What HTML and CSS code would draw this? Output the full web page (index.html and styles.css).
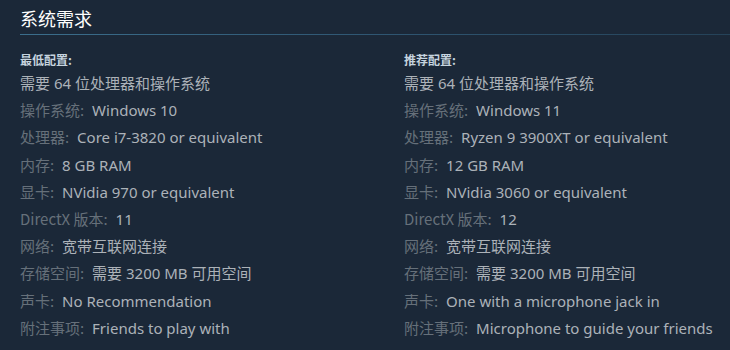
FILE: index.html
```html
<!DOCTYPE html>
<html lang="zh-CN">
<head>
<meta charset="utf-8">
<link rel="stylesheet" href="styles.css">
</head>
<body>
<div class="sysreq">
  <h2 class="title">系统需求</h2>
  <div class="cols">
    <div class="col">
      <div class="head">最低配置:</div>
      <ul class="list">
        <li class="plain">需要 64 位处理器和操作系统</li>
        <li><span class="k">操作系统:</span> Windows 10</li>
        <li><span class="k">处理器:</span> Core i7-3820 or equivalent</li>
        <li><span class="k">内存:</span> 8 GB RAM</li>
        <li><span class="k">显卡:</span> NVidia 970 or equivalent</li>
        <li><span class="k">DirectX 版本:</span> 11</li>
        <li><span class="k">网络:</span> 宽带互联网连接</li>
        <li><span class="k">存储空间:</span> 需要 3200 MB 可用空间</li>
        <li><span class="k">声卡:</span> No Recommendation</li>
        <li><span class="k">附注事项:</span> Friends to play with</li>
      </ul>
    </div>
    <div class="col">
      <div class="head">推荐配置:</div>
      <ul class="list">
        <li class="plain">需要 64 位处理器和操作系统</li>
        <li><span class="k">操作系统:</span> Windows 11</li>
        <li><span class="k">处理器:</span> Ryzen 9 3900XT or equivalent</li>
        <li><span class="k">内存:</span> 12 GB RAM</li>
        <li><span class="k">显卡:</span> NVidia 3060 or equivalent</li>
        <li><span class="k">DirectX 版本:</span> 12</li>
        <li><span class="k">网络:</span> 宽带互联网连接</li>
        <li><span class="k">存储空间:</span> 需要 3200 MB 可用空间</li>
        <li><span class="k">声卡:</span> One with a microphone jack in</li>
        <li><span class="k">附注事项:</span> Microphone to guide your friends</li>
      </ul>
    </div>
  </div>
</div>
</body>
</html>
```

FILE: styles.css
```css
html, body {
  margin: 0;
  padding: 0;
  background: #1b2838;
  width: 730px;
  height: 350px;
  overflow: hidden;
}
body {
  font-family: "Noto Sans", "Noto Sans CJK SC", sans-serif;
  color: #acb2b8;
}
.sysreq {
  padding: 6px 0 0 20px;
}
.title {
  margin: 0;
  font-family: "Noto Sans CJK SC", sans-serif;
  font-weight: normal;
  font-size: 18px;
  line-height: 24px;
  color: #ffffff;
  padding-bottom: 4px;
  border-bottom: 1px solid transparent;
  border-image: linear-gradient(to right, #3b6e8c 0%, #2f5672 50%, #254258 100%) 1;
}
.cols {
  display: grid;
  grid-template-columns: 384px 1fr;
  padding-top: 16px;
}
.head {
  font-family: "Noto Sans CJK SC", sans-serif;
  font-size: 12px;
  font-weight: bold;
  line-height: 18px;
  color: #c6d4df;
  margin-bottom: 1px;
}
.list {
  list-style: none;
  margin: 0;
  padding: 0;
}
.list li {
  font-size: 15px;
  line-height: 27.2px;
  height: 27.2px;
  white-space: nowrap;
  color: #acb2b8;
}
.list li .k {
  color: #66707a;
  font-family: "Noto Sans CJK SC", sans-serif;
  line-height: 1;
  margin-right: 4px;
}
```
